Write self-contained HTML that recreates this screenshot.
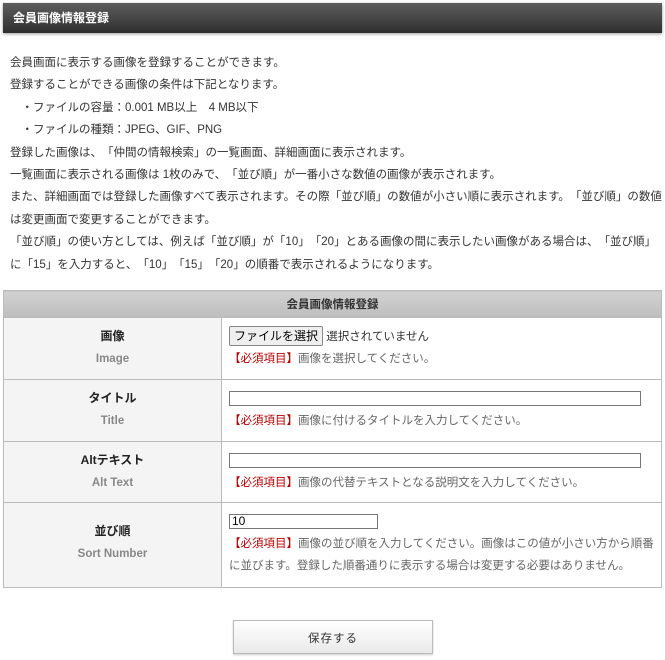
<!DOCTYPE html>
<html><head><meta charset="utf-8"><style>
*{box-sizing:border-box}
body{margin:0;width:665px;height:660px;background:#fff;font-family:"Liberation Sans","Noto Sans CJK JP",sans-serif;font-size:12px;color:#333;position:relative;overflow:hidden;text-spacing-trim:space-all}
.hd{position:absolute;left:3px;top:3px;width:659px;height:30px;background:linear-gradient(#5e5e5e,#2e2e2e);color:#fff;font-weight:bold;font-size:12px;line-height:30px;padding-left:10px;box-shadow:0 1px 3px rgba(0,0,0,.4)}
.intro{position:absolute;left:10px;top:52px;width:655px;line-height:22.4px;font-size:11.5px;white-space:nowrap}
table{position:absolute;left:3px;top:290px;width:659px;border-collapse:collapse}
th.top{height:27px;background:linear-gradient(#d2d2d2,#bdbdbd);border:1px solid #bbb;font-size:11.5px;color:#333}
td{border:1px solid #bbb;vertical-align:top}
td.l{width:218px;background:#f4f4f4;text-align:center;font-weight:bold;font-size:12px;color:#222;padding-top:7px;line-height:22px}
td.l span{color:#888;font-size:11.5px}
td.r{padding:8px 7px 0 7px;line-height:22px;font-size:11.5px;color:#666}
.req{color:#b00}
.in{display:block;border:1px solid #777;height:15px;margin:3px 0 4px;width:412px;font-size:12px;line-height:13px;color:#000;padding-left:2px}
.fb{display:inline-block;border:1px solid #888;background:#efefef;color:#000;font-size:12px;padding:0 4px;height:20px;line-height:18px;border-radius:2px}
.btn{position:absolute;left:233px;top:620px;width:200px;height:34px;border:1px solid #bbb;background:linear-gradient(#fff,#e9e9e9);text-align:center;line-height:36px;font-size:11.5px;color:#333;letter-spacing:1px;box-shadow:0 1px 2px rgba(0,0,0,.2)}
</style></head><body>
<div class="hd">会員画像情報登録</div>
<div class="intro">
会員画面に表示する画像を登録することができます。<br>
登録することができる画像の条件は下記となります。<br>
　・ファイルの容量：0.001 MB以上　4 MB以下<br>
　・ファイルの種類：JPEG、GIF、PNG<br>
登録した画像は、「仲間の情報検索」の一覧画面、詳細画面に表示されます。<br>
一覧画面に表示される画像は 1枚のみで、「並び順」が一番小さな数値の画像が表示されます。<br>
また、詳細画面では登録した画像すべて表示されます。その際「並び順」の数値が小さい順に表示されます。「並び順」の数値<br>は変更画面で変更することができます。<br>
「並び順」の使い方としては、例えば「並び順」が「10」「20」とある画像の間に表示したい画像がある場合は、「並び順」<br>に「15」を入力すると、「10」「15」「20」の順番で表示されるようになります。
</div>
<table>
<tr><th class="top" colspan="2">会員画像情報登録</th></tr>
<tr style="height:62px"><td class="l">画像<br><span>Image</span></td><td class="r"><span class="fb">ファイルを選択</span> <span style="color:#333">選択されていません</span><br><span class="req">【必須項目】</span>画像を選択してください。</td></tr>
<tr style="height:62px"><td class="l">タイトル<br><span>Title</span></td><td class="r"><span class="in"></span><span class="req">【必須項目】</span>画像に付けるタイトルを入力してください。</td></tr>
<tr style="height:61px"><td class="l">Altテキスト<br><span>Alt Text</span></td><td class="r"><span class="in"></span><span class="req">【必須項目】</span>画像の代替テキストとなる説明文を入力してください。</td></tr>
<tr style="height:85px"><td class="l" style="padding-top:17px">並び順<br><span>Sort Number</span></td><td class="r"><span class="in" style="width:149px">10</span><span class="req">【必須項目】</span>画像の並び順を入力してください。画像はこの値が小さい方から順番<br>に並びます。登録した順番通りに表示する場合は変更する必要はありません。</td></tr>
</table>
<div class="btn">保存する</div>
</body></html>
